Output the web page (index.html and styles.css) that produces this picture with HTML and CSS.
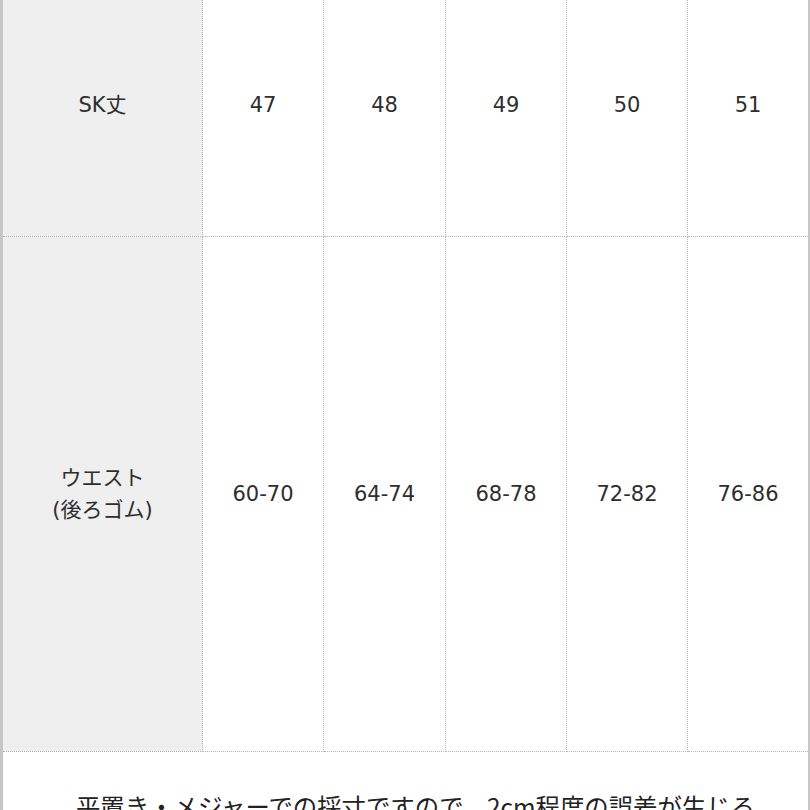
FILE: index.html
```html
<!DOCTYPE html>
<html lang="ja">
<head>
<meta charset="utf-8">
<link rel="stylesheet" href="styles.css">
</head>
<body>
<div class="sheet">
  <div class="grid">
    <div class="cell head r1">SK丈</div>
    <div class="cell r1">47</div>
    <div class="cell r1">48</div>
    <div class="cell r1">49</div>
    <div class="cell r1">50</div>
    <div class="cell r1 last">51</div>
    <div class="cell head r2">ウエスト<br>(後ろゴム)</div>
    <div class="cell r2">60-70</div>
    <div class="cell r2">64-74</div>
    <div class="cell r2">68-78</div>
    <div class="cell r2">72-82</div>
    <div class="cell r2 last">76-86</div>
  </div>
  <p class="note">平置き・メジャーでの採寸ですので、2cm程度の誤差が生じる<br>場合がございます。</p>
</div>
</body>
</html>
```

FILE: styles.css
```css
html, body {
  margin: 0;
  padding: 0;
  background: #ffffff;
  overflow: hidden;
}
.sheet {
  width: 810px;
  box-sizing: border-box;
  border-left: 3px solid #c6c6c6;
  border-right: 2px solid #c6c6c6;
  margin-top: -27px;
  font-family: "DejaVu Sans", "Noto Sans CJK JP", sans-serif;
  color: #2e2e2e;
  min-height: 900px;
}
.grid {
  display: grid;
  grid-template-columns: 200px 121px 122px 121px 121px 1fr;
}
.cell {
  display: flex;
  align-items: center;
  justify-content: center;
  text-align: center;
  font-size: 21px;
  line-height: 32px;
  border-right: 1px dotted #b5b5b5;
  border-bottom: 1px dotted #b5b5b5;
  background: #ffffff;
}
.cell.last {
  border-right: none;
}
.cell.head {
  background: #efefef;
}
.r1 {
  height: 263px;
}
.r2 {
  height: 514px;
}
.note {
  margin: 0;
  padding: 36px 20px 0 40px;
  text-align: center;
  font-family: "Noto Sans CJK JP", sans-serif;
  font-size: 24.4px;
  line-height: 36px;
  color: #222222;
}
```
